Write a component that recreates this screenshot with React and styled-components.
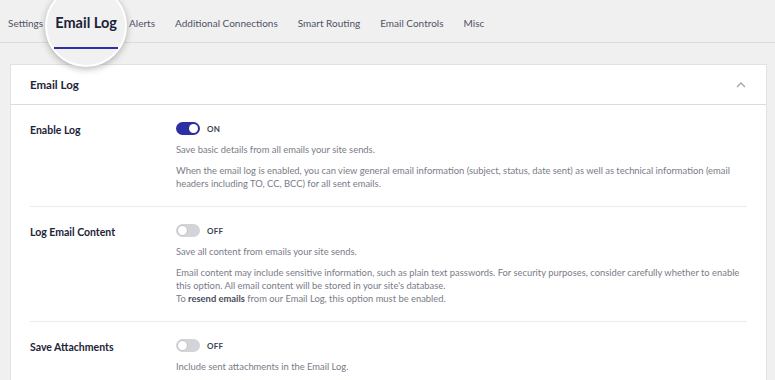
import React from 'react';
import styled, { createGlobalStyle } from 'styled-components';

const GlobalStyle = createGlobalStyle`
  body {
    margin: 0;
    background: #f0f0f1;
    font-family: Lato, "Open Sans", sans-serif;
    overflow: hidden;
  }
`;

const Page = styled.div`
  width: 775px;
  height: 380px;
  overflow: hidden;
`;

const TabBar = styled.div`
  display: flex;
  align-items: center;
  gap: 20px;
  box-sizing: border-box;
  height: 43px;
  padding: 4px 0 0 8px;
  border-bottom: 1px solid #dcdcde;
`;

const Tab = styled.div`
  position: relative;
  font-size: 10px;
  line-height: 14px;
  color: #4f5262;
  white-space: nowrap;
  width: ${p => (p.$width ? p.$width + 'px' : 'auto')};
  height: 14px;
`;

const Magnifier = styled.div`
  position: absolute;
  left: 50%;
  top: -31px;
  width: 82px;
  height: 82px;
  margin-left: -41px;
  border-radius: 50%;
  background: #f1f1f1;
  border: 2px solid #ffffff;
  box-shadow: 0 2px 7px rgba(0, 0, 0, 0.28);
  display: flex;
  flex-direction: column;
  align-items: center;
  justify-content: flex-end;
  padding-bottom: 16px;
  box-sizing: border-box;
`;

const ZoomLabel = styled.div`
  font-size: 14.5px;
  line-height: 18px;
  font-weight: 700;
  color: #1d2338;
  padding: 0 1px 15px;
  border-bottom: 2px solid #2d2fa6;
`;

const Card = styled.div`
  margin: 21px 8px 0 10px;
  background: #fff;
  border: 1px solid #e2e2e4;
`;

const CardHeader = styled.div`
  display: flex;
  align-items: center;
  justify-content: space-between;
  height: 39px;
  padding: 0 20px 0 19px;
  border-bottom: 1px solid #dcdcde;
  font-size: 11.5px;
  font-weight: 700;
  color: #1d2338;
`;

const Rows = styled.div`
  padding: 0 19px;
`;

const Row = styled.div`
  display: grid;
  grid-template-columns: 146px 1fr;
  padding: 17px 0 16px;
  border-bottom: ${p => (p.$last ? 'none' : '1px solid #ececee')};
`;

const Label = styled.div`
  font-size: 10.5px;
  font-weight: 700;
  color: #1d2338;
  line-height: 13px;
  padding-top: 2px;
`;

const Control = styled.div`
  display: flex;
  flex-direction: column;
`;

const ToggleLine = styled.div`
  display: flex;
  align-items: center;
  gap: 7px;
  height: 13px;
`;

const Switch = styled.div`
  position: relative;
  width: 24px;
  height: 13px;
  border-radius: 7px;
  background: ${p => (p.$on ? '#2d2fa6' : '#d3d3d8')};
`;

const Knob = styled.div`
  position: absolute;
  top: 2px;
  left: ${p => (p.$on ? '13px' : '2px')};
  width: 9px;
  height: 9px;
  border-radius: 50%;
  background: #fff;
  box-shadow: 0 0 0 0.5px rgba(0, 0, 0, 0.15);
`;

const State = styled.span`
  font-size: 8px;
  font-weight: 700;
  color: #3c3f4e;
  letter-spacing: 0.2px;
`;

const Desc = styled.p`
  margin: 8px 0 0;
  font-size: 9.4px;
  line-height: 13px;
  color: #7a7c88;

  strong {
    font-weight: 700;
    color: #4a4d5c;
  }
`;

function Toggle({ on }) {
  return (
    <ToggleLine>
      <Switch $on={on}>
        <Knob $on={on} />
      </Switch>
      <State>{on ? 'ON' : 'OFF'}</State>
    </ToggleLine>
  );
}

const tabs = ['Settings', 'Email Log', 'Alerts', 'Additional Connections', 'Smart Routing', 'Email Controls', 'Misc'];

export default function App() {
  return (
    <Page>
      <GlobalStyle />
      <TabBar>
        {tabs.map(t =>
          t === 'Email Log' ? (
            <Tab key={t} $width={46}>
              <Magnifier>
                <ZoomLabel>Email Log</ZoomLabel>
              </Magnifier>
            </Tab>
          ) : (
            <Tab key={t}>{t}</Tab>
          )
        )}
      </TabBar>
      <Card>
        <CardHeader>
          Email Log
          <svg width="10" height="7" viewBox="0 0 10 7" fill="none">
            <polyline points="1,6 5,2 9,6" stroke="#a3a6ae" strokeWidth="1.4" />
          </svg>
        </CardHeader>
        <Rows>
          <Row>
            <Label>Enable Log</Label>
            <Control>
              <Toggle on />
              <Desc>Save basic details from all emails your site sends.</Desc>
              <Desc>
                When the email log is enabled, you can view general email information (subject, status, date sent) as well as technical information (email headers including TO, CC, BCC) for all sent emails.
              </Desc>
            </Control>
          </Row>
          <Row>
            <Label>Log Email Content</Label>
            <Control>
              <Toggle />
              <Desc>Save all content from emails your site sends.</Desc>
              <Desc>
                Email content may include sensitive information, such as plain text passwords. For security purposes, consider carefully whether to enable this option. All email content will be stored in your site's database.
                <br />
                To <strong>resend emails</strong> from our Email Log, this option must be enabled.
              </Desc>
            </Control>
          </Row>
          <Row $last>
            <Label>Save Attachments</Label>
            <Control>
              <Toggle />
              <Desc>Include sent attachments in the Email Log.</Desc>
            </Control>
          </Row>
        </Rows>
      </Card>
    </Page>
  );
}
